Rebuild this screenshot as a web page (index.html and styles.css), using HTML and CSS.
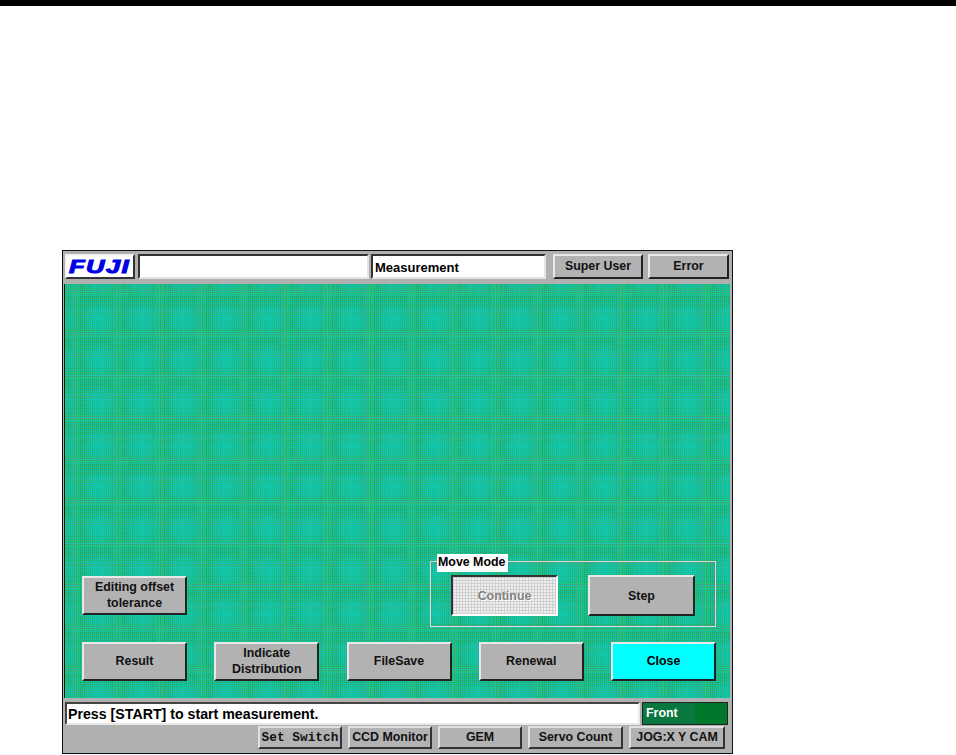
FILE: index.html
```html
<!DOCTYPE html>
<html lang="en">
<head>
<meta charset="utf-8">
<title>Measurement</title>
<link rel="stylesheet" href="styles.css">
</head>
<body>
<div class="topbar"></div>
<main class="window">
  <header class="head">
    <div class="logo"><span class="logo-text">FUJI</span></div>
    <div class="field field-blank"></div>
    <div class="field field-title">Measurement</div>
    <button class="btn btn-user">Super User</button>
    <button class="btn btn-error">Error</button>
  </header>
  <section class="canvas">
    <div class="row-upper">
      <button class="btn btn-main">Editing offset<br>tolerance</button>
      <fieldset class="mode">
        <span class="mode-label">Move Mode</span>
        <button class="btn btn-mode btn-off"><span class="off-text">Continue</span></button>
        <button class="btn btn-mode">Step</button>
      </fieldset>
    </div>
    <div class="row-lower">
      <button class="btn btn-main">Result</button>
      <button class="btn btn-main">Indicate<br>Distribution</button>
      <button class="btn btn-main">FileSave</button>
      <button class="btn btn-main">Renewal</button>
      <button class="btn btn-main btn-close">Close</button>
    </div>
  </section>
  <div class="status">
    <div class="field field-msg">Press [START] to start measurement.</div>
    <div class="front">Front</div>
  </div>
  <footer class="tools">
    <button class="btn btn-tool btn-mono w-84">Set Switch</button>
    <button class="btn btn-tool w-84">CCD Monitor</button>
    <button class="btn btn-tool w-84">GEM</button>
    <button class="btn btn-tool w-95">Servo Count</button>
    <button class="btn btn-tool w-96">JOG:X Y CAM</button>
  </footer>
</main>
</body>
</html>
```
FILE: styles.css
```css
* { box-sizing: border-box; }
html, body { margin: 0; padding: 0; background: #fff; }
body { width: 956px; height: 755px; overflow: hidden; font: bold 12.4px "Liberation Sans", Arial, sans-serif; color: #111; }
.topbar { height: 6px; background: #000; }
.window {
  width: 671px; height: 504px; margin: 244px 0 0 62px;
  background: #b0b0b0; border: 1px solid #111;
  display: flex; flex-direction: column;
}
.head { height: 33px; flex: none; display: flex; align-items: flex-start; padding: 3px 0 0 2px; }
.logo {
  width: 70px; height: 25px; background: #fff; margin-right: 3px;
  border: 2px solid; border-color: #f4f4f4 #333 #333 #f4f4f4;
  display: flex; align-items: center; justify-content: center; overflow: hidden;
}
.logo-text {
  font: italic bold 18px/18px "Liberation Sans", Arial, sans-serif; color: #0000e6;
  letter-spacing: 1px; display: inline-block; transform: scale(1.42, 1); -webkit-text-stroke: 1px #0000e6;
}
.field {
  height: 25px; background: #fff; border: 2px solid;
  border-color: #333 #e4e4e4 #e4e4e4 #333; line-height: 24px; padding-left: 2px; color: #000;
}
.field-blank { width: 231px; margin-right: 2px; }
.field-title { width: 175px; margin-right: 7px; font-size: 13px; }
.btn {
  display: block; padding: 0; margin: 0; background: #b2b2b2; color: #111;
  font: bold 12.4px/16px "Liberation Sans", Arial, sans-serif; text-align: center;
  border: 2px solid; border-color: #e8e8e8 #222 #222 #e8e8e8;
}
.btn-user { width: 90px; height: 25px; margin-right: 5px; padding-bottom: 2px; }
.btn-error { width: 81px; height: 25px; padding-bottom: 2px; }

.canvas {
  flex: none; height: 414px; margin-left: 1px; width: 666px;
  display: flex; flex-direction: column; justify-content: flex-end;
  padding: 0 14px 17px 17px;
  border-left: 1px solid #111;
  background-color: #1cb08c;
  background-image:
    radial-gradient(circle at 50% 50%, rgba(0,225,245,.34) 0, rgba(0,225,245,.2) 11px, transparent 19px),
    linear-gradient(90deg, rgba(0,235,240,.24) 0 1px, rgba(140,120,150,.28) 1px 2px, rgba(30,225,50,.32) 2px 3px, rgba(0,235,240,.24) 3px 4px, rgba(140,120,150,.28) 4px 5px, rgba(30,225,50,.32) 5px 6px, rgba(0,235,240,.24) 6px 7px, transparent 7px),
    linear-gradient(rgba(30,225,50,.3) 0 1px, rgba(140,120,150,.26) 1px 2px, rgba(0,235,240,.24) 2px 3px, rgba(140,120,150,.26) 3px 4px, rgba(30,225,50,.3) 4px 5px, rgba(0,235,240,.24) 5px 6px, transparent 6px),
    linear-gradient(rgba(0,235,240,.16) 0 1px, rgba(140,120,150,.16) 1px 2px, rgba(30,225,50,.2) 2px 3px, rgba(140,120,150,.16) 3px 4px, transparent 4px),
    repeating-linear-gradient(90deg, rgba(0,225,60,.42) 0 1px, rgba(80,110,160,.34) 1px 2px),
    repeating-linear-gradient(0deg, rgba(0,235,235,.38) 0 1px, rgba(50,180,70,.32) 1px 2px);
  background-size: 42px 42px, 42px 42px, 42px 42px, 42px 42px, auto, auto;
  background-position: 14px 14px, 7px 0, 0 5px, 0 26px, 0 0, 0 0;
}
.row-upper { display: flex; justify-content: space-between; align-items: flex-end; margin-bottom: 15px; }
.row-upper .btn-main { margin-bottom: 12px; }
.row-lower { display: flex; justify-content: space-between; }
.btn-main { width: 105px; height: 39px; padding-bottom: 1px; }
.btn-close { background: #00ffff; color: #000; }
.mode {
  position: relative; width: 286px; height: 66px; margin: 0; padding: 13px 20px 0 20px;
  border: 1px solid #dcdcdc; outline: 1px solid rgba(120,120,120,.4); outline-offset: -2px;
  display: flex; justify-content: space-between; align-items: flex-start; min-inline-size: 0;
}
.mode-label {
  position: absolute; left: 6px; top: -8px; background: #fff; color: #000;
  height: 18px; line-height: 17px; padding: 0 1px; width: 71px; white-space: nowrap;
}
.btn-mode { width: 107px; height: 41px; }
.btn-off {
  border-color: #333 #fff #fff #333;
  background-color: #f0f0f0;
  background-image:
    repeating-linear-gradient(90deg, #cfcfcf 0 1px, transparent 1px 3px),
    repeating-linear-gradient(0deg, #cfcfcf 0 1px, transparent 1px 3px);
}
.off-text { color: #808080; text-shadow: 1px 1px 0 #fff; }
.status { height: 27px; flex: none; display: flex; align-items: flex-start; padding: 4px 0 0 2px; }
.field-msg { width: 575px; height: 23px; line-height: 21px; margin-right: 3px; font-size: 14.2px; padding-left: 1px; border-color: #444 #e8e8e8 #e8e8e8 #444; }
.front {
  width: 84px; height: 21px; background: #087840; color: #fff; line-height: 20px; padding-left: 3px;
  margin-top: 1px; outline: 1px solid #222;
  background-image: linear-gradient(90deg, transparent 62%, #00782c 62%);
}
.tools { flex: none; display: flex; padding: 1px 0 0 195px; gap: 6px; }
.btn-tool { height: 23px; padding-bottom: 1px; border-color: #e0e0e0 #333 #333 #e0e0e0; }
.btn-mono { font: bold 12.8px "Liberation Mono", "Courier New", monospace; }
.w-84 { width: 84px; }
.w-95 { width: 95px; }
.w-96 { width: 96px; }
```
